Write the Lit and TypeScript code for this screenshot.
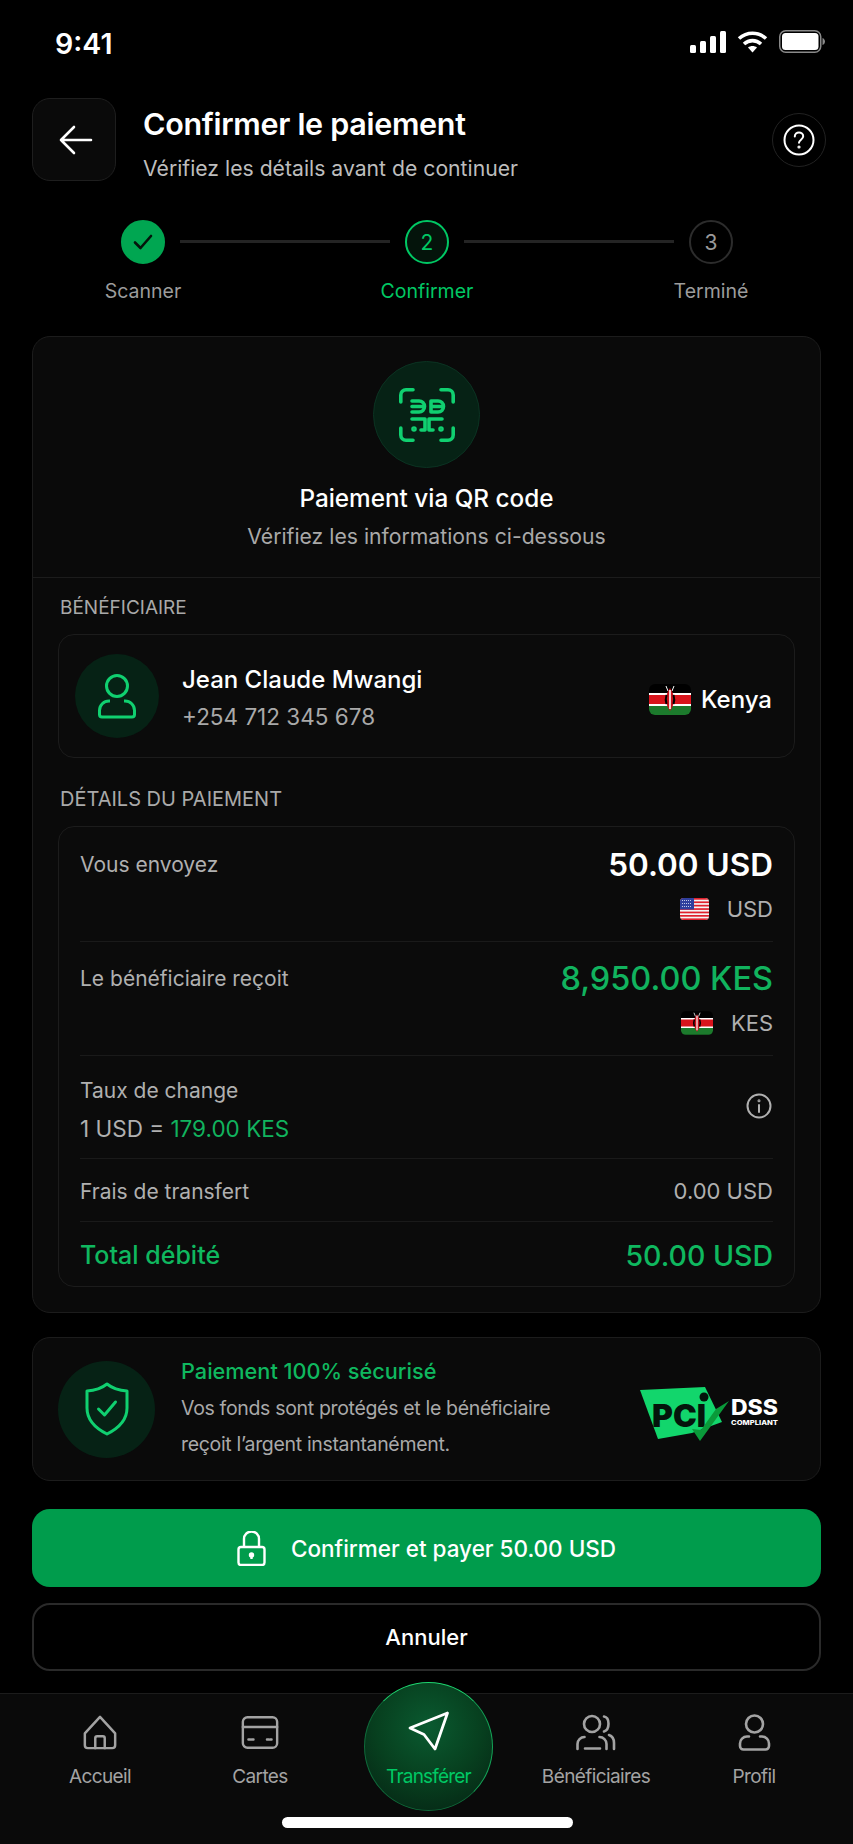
import { LitElement, html, css, svg } from 'lit';
import { customElement } from 'lit/decorators.js';

const kenyaFlag = (w: number, h: number) => html`
  <svg class="flag" width=${w} height=${h} viewBox="0 0 42 31">
    <rect width="42" height="31" rx="6" fill="#000"/>
    <path d="M0 10h42v11H0z" fill="#d8141c"/>
    <path d="M0 21h42v4a6 6 0 0 1-6 6H6a6 6 0 0 1-6-6z" fill="#1c7a2c"/>
    <path d="M0 9h42v2H0zM0 20h42v2H0z" fill="#fff"/>
    <path d="M17 2l2 5M25 2l-2 5" stroke="#fff" stroke-width="1"/>
    <path d="M21 4c3 4 4 8 4 11.500s-1 7.500-4 11.500c-3-4-4-8-4-11.500S18 8 21 4z" fill="#c8101a"/>
    <path d="M17.500 11c-1 3-1 6 0 9M24.500 11c1 3 1 6 0 9" stroke="#000" stroke-width="2" fill="none"/>
    <path d="M21 6v19" stroke="#fff" stroke-width="1.600"/>
  </svg>`;

const usFlag = html`
  <svg class="flag" width="29" height="22" viewBox="0 0 29 22">
    <defs><clipPath id="us"><rect width="29" height="22" rx="4"/></clipPath></defs>
    <g clip-path="url(#us)">
      <rect width="29" height="22" fill="#f4f4f4"/>
      ${[0, 1, 2, 3, 4, 5, 6].map((i) => svg`<rect y=${i * 3.4} width="29" height="1.700" fill="#e0202c"/>`)}
      <rect width="14" height="11.500" fill="#2f3f9e"/>
      <path d="M2 2.500h10M2 5.500h10M2 8.500h10" stroke="#c5cbe8" stroke-width="1" stroke-dasharray="1 1"/>
    </g>
  </svg>`;

const navIcons: Record<string, unknown> = {
  home: svg`<path d="M19 2.500 3 20v12.500a3 3 0 0 0 3 3h26a3 3 0 0 0 3-3V20z"/><path d="M14 35.500V25a2 2 0 0 1 2-2h6a2 2 0 0 1 2 2v10.500"/>`,
  card: svg`<rect x="2" y="2" width="37" height="33" rx="5"/><path d="M2 12.500h37"/><path d="M8 26h7M28 26h5" stroke-dasharray="2 1.500"/>`,
  people: svg`<circle cx="17" cy="10" r="8"/><path d="M29 2.500c6 1 6 13 0 15"/><path d="M2.500 35v-5a7 7 0 0 1 7-7M24.500 23a7 7 0 0 1 7 7v5M10 34.500h15"/><path d="M34 21c3 1 5 4 5 8v6"/>`,
  person: svg`<circle cx="16.500" cy="10" r="8.500"/><path d="M11 22.500H9a7 7 0 0 0-7 7v2.500a3.500 3.500 0 0 0 3.500 3.500h22a3.500 3.500 0 0 0 3.500-3.500v-2.500a7 7 0 0 0-7-7h-2"/>`,
};

const navItems = [
  { label: 'Accueil', icon: 'home', w: 36, vb: '0 0 38 38', center: 100 },
  { label: 'Cartes', icon: 'card', w: 38, vb: '0 0 41 37', center: 260 },
  { label: 'Bénéficiaires', icon: 'people', w: 42, vb: '0 0 42 37', center: 596 },
  { label: 'Profil', icon: 'person', w: 33, vb: '0 0 33 37', center: 754 },
];

@customElement('app-root')
export class AppRoot extends LitElement {
  static styles = css`
    :host {
      display: block;
      width: 853px;
      height: 1844px;
      background: #000;
      color: #fff;
      font-family: Inter, 'Liberation Sans', sans-serif;
      overflow: hidden;
    }
    * { box-sizing: border-box; }

    .status {
      height: 98px;
      display: flex;
      justify-content: space-between;
      padding: 30px 28px 0 55px;
    }
    .time { font-size: 28.500px; font-weight: 600; line-height: 28px; }
    .status-icons { display: flex; gap: 11px; height: 23px; align-items: center; }

    .header {
      height: 83px;
      padding: 0 27px 0 32px;
      display: flex;
      align-items: center;
    }
    .back {
      width: 84px;
      height: 83px;
      border: 1px solid #1e1e1e;
      border-radius: 18px;
      background: #0a0a0a;
      display: flex;
      align-items: center;
      justify-content: center;
      padding-left: 3px;
      margin-right: 27px;
    }
    .head-text { flex: 1; padding-top: 10px; }
    .head-text h1 { margin: -3px 0 0; font-size: 30.500px; font-weight: 600; line-height: 38px; letter-spacing: -0.3px; }
    .head-text p { margin: 11px 0 0; font-size: 21.200px; line-height: 28px; color: #bdbdbd; }
    .help {
      width: 54px;
      height: 54px;
      border: 1px solid #222;
      border-radius: 50%;
      display: flex;
      align-items: center;
      justify-content: center;
    }

    .stepper {
      display: flex;
      align-items: flex-start;
      padding: 0 120px 0 121px;
      margin-top: 39px;
      height: 116px;
    }
    .step { width: 44px; display: flex; flex-direction: column; align-items: center; }
    .dot {
      width: 44px;
      height: 44px;
      border-radius: 50%;
      border: 2px solid #2c2c2c;
      display: flex;
      align-items: center;
      justify-content: center;
      font-size: 21px;
      color: #9a9a9a;
    }
    .dot.done { background: #00a651; border-color: #00a651; }
    .dot.active { border-color: #00c864; color: #00c864; background: #04140b; }
    .step span {
      white-space: nowrap;
      margin-top: 14px;
      font-size: 19.500px;
      line-height: 26px;
      color: #9c9c9c;
    }
    .step span.on { color: #00c864; }
    .line { flex: 1; height: 3px; background: #242424; margin: 20px 15px 0; }

    .card {
      margin: 0 32px;
      background: #0a0a0a;
      border: 1px solid #1c1c1c;
      border-radius: 18px;
    }
    .main { height: 977px; }
    .hero {
      height: 241px;
      border-bottom: 1px solid #1c1c1c;
      display: flex;
      flex-direction: column;
      align-items: center;
      padding-top: 24px;
    }
    .round {
      border-radius: 50%;
      background: #062215;
      display: flex;
      align-items: center;
      justify-content: center;
      flex: none;
    }
    .round.qr { width: 107px; height: 107px; border: 1px solid #0b3322; }
    .hero h2 { margin: 15px 0 0; font-size: 24.300px; font-weight: 500; line-height: 30px; }
    .hero p { margin: 9px 0 0; font-size: 21.200px; line-height: 28px; color: #a9a9a9; }

    .section { padding: 0 25px; }
    .section h3 {
      margin: 0;
      height: 56px;
      padding: 2px 0 0 2px;
      display: flex;
      align-items: center;
      font-size: 19px;
      font-weight: 400;
      color: #a9a9a9;
    }
    .inner { background: #0b0b0b; border: 1px solid #1c1c1c; border-radius: 16px; }
    .benef { height: 124px; display: flex; align-items: center; padding: 0 22px 0 16px; }
    .round.avatar { width: 84px; height: 84px; margin-right: 23px; }
    .who { flex: 1; padding-top: 3px; }
    .who b { display: block; font-size: 24px; font-weight: 500; line-height: 32px; }
    .who small { display: block; margin-top: 6px; font-size: 22.500px; line-height: 30px; color: #a9a9a9; }
    .country { display: flex; align-items: center; gap: 10px; padding-top: 6px; font-size: 24px; font-weight: 500; }
    .flag { display: block; flex: none; }
    .section.details h3 { margin-top: 12px; font-size: 20px; }

    .table {
      height: 461px;
      padding: 0 21px;
      display: grid;
      grid-template-rows: 115px 114px 103px 63px 1fr;
    }
    .row {
      display: flex;
      justify-content: space-between;
      border-bottom: 1px solid #1a1a1a;
      font-size: 21px;
      color: #b0b0b0;
    }
    .row:last-child { border-bottom: 0; }
    .row.tall { padding-top: 17px; }
    .row.tall + .row.tall { padding-top: 16px; }
    .row.center { align-items: center; }
    .row.low { padding-top: 2px; }
    .row .right { display: flex; flex-direction: column; align-items: flex-end; }
    .lbl { line-height: 42px; }
    .amount { font-size: 31.500px; font-weight: 600; line-height: 42px; color: #fff; }
    .amount.green { color: #11b35e; font-weight: 500; font-size: 32.500px; }
    .cur { display: flex; align-items: center; gap: 18px; margin-top: 6px; font-size: 22px; line-height: 34px; }
    .rate { line-height: 38px; margin-top: 6px; }
    .rate div:last-child { font-size: 22.500px; }
    .info { margin: -2px 1px 0 0; }
    .val { font-size: 22px; }
    .green { color: #11b35e; }
    .total { font-size: 25px; font-weight: 500; color: #0fb85f; }
    .total-amount { font-size: 28.500px; font-weight: 500; color: #0fb85f; }

    .secure {
      height: 144px;
      margin-top: 24px;
      display: flex;
      align-items: center;
      padding: 0 41px 0 25px;
    }
    .round.shield { width: 97px; height: 97px; margin-right: 26px; }
    .secure-text { flex: 1; padding-top: 1px; }
    .secure-text b { display: block; font-size: 21.700px; font-weight: 500; line-height: 28px; color: #0fb85f; }
    .secure-text p { margin: 5px 0 0; font-size: 19.500px; line-height: 36px; letter-spacing: -0.33px; color: #a9a9a9; }
    .pci { flex: none; margin-top: 12px; }

    .primary {
      margin: 28px 32px 0;
      height: 78px;
      border-radius: 18px;
      background: #009c4c;
      display: flex;
      align-items: center;
      justify-content: center;
      gap: 25px;
      font-size: 22.500px;
      font-weight: 500;
    }
    .ghost {
      margin: 16px 32px 0;
      height: 68px;
      border-radius: 18px;
      border: 2px solid #2a2a2a;
      display: flex;
      align-items: center;
      justify-content: center;
      font-size: 22px;
      font-weight: 500;
    }

    .nav {
      position: relative;
      margin-top: 22px;
      height: 151px;
      background: #0a0a0a;
      border-top: 1px solid #1c1c1c;
    }
    .tab {
      position: absolute;
      top: 20px;
      width: 140px;
      margin-left: -70px;
      display: flex;
      flex-direction: column;
      align-items: center;
      font-size: 19px;
      letter-spacing: -0.6px;
      color: #a3a3a3;
    }
    .tab svg { height: 37px; display: block; }
    .tab span { margin-top: 13px; line-height: 26px; white-space: nowrap; }
    .send {
      position: absolute;
      left: 364px;
      top: -12px;
      width: 129px;
      height: 129px;
      border-radius: 50%;
      background: radial-gradient(circle at 50% 35%, #0a5a30 0%, #07401f 50%, #052012 100%);
      border: 1px solid #0f6a3a;
      border-top-color: #1ed770;
      border-right-color: #14a357;
      display: flex;
      flex-direction: column;
      align-items: center;
      padding-top: 28px;
      font-size: 19px;
      letter-spacing: -0.8px;
      color: #00c864;
    }
    .send svg { display: block; margin-right: -1px; }
    .send span { margin-top: 13px; line-height: 26px; }
    .home-bar {
      position: absolute;
      left: 282px;
      top: 123px;
      width: 291px;
      height: 11px;
      border-radius: 6px;
      background: #fff;
    }
  `;

  render() {
    return html`
      <div class="status">
        <div class="time">9:41</div>
        <div class="status-icons">
          <svg width="36" height="22" viewBox="0 0 36 22" fill="#fff">
            <rect x="0" y="14" width="6" height="8" rx="1.500"/>
            <rect x="10" y="10" width="6" height="12" rx="1.500"/>
            <rect x="20" y="5" width="6" height="17" rx="1.500"/>
            <rect x="30" y="0" width="6" height="22" rx="1.500"/>
          </svg>
          <svg width="31" height="22" viewBox="0 0 31 22" fill="none" stroke="#fff" stroke-width="3.600">
            <path d="M2 7.500c8-7 19-7 27 0"/>
            <path d="M7 13c5-4.500 12-4.500 17 0"/>
            <path d="M15.500 21.500l-4.500-5c2.500-2 6.500-2 9 0z" fill="#fff" stroke="none"/>
          </svg>
          <svg width="46" height="23" viewBox="0 0 46 23">
            <rect x="0.750" y="0.750" width="41" height="21.500" rx="6" fill="none" stroke="#8a8a8a" stroke-width="1.500"/>
            <rect x="3" y="3" width="36.500" height="17" rx="3.500" fill="#fff"/>
            <path d="M43.500 8v7c1.500-.5 2.500-2 2.500-3.500S45 8.500 43.500 8z" fill="#8a8a8a"/>
          </svg>
        </div>
      </div>

      <div class="header">
        <div class="back">
          <svg width="34" height="30" viewBox="0 0 34 30" fill="none" stroke="#fff" stroke-width="2.600" stroke-linecap="round" stroke-linejoin="round">
            <path d="M15 2 2 15l13 13M2 15h30"/>
          </svg>
        </div>
        <div class="head-text">
          <h1>Confirmer le paiement</h1>
          <p>Vérifiez les détails avant de continuer</p>
        </div>
        <div class="help">
          <svg width="32" height="32" viewBox="0 0 32 32" fill="none" stroke="#fff" stroke-width="2" stroke-linecap="round">
            <circle cx="16" cy="16" r="14.500"/>
            <path d="M11.800 12.500c0-2.500 2-4 4.200-4s4.200 1.500 4.200 3.800c0 3.400-4.200 3.400-4.200 6.500"/>
            <circle cx="16" cy="23" r="0.600" fill="#fff"/>
          </svg>
        </div>
      </div>

      <div class="stepper">
        <div class="step">
          <div class="dot done">
            <svg width="20" height="16" viewBox="0 0 20 16" fill="none" stroke="#04140b" stroke-width="2.600" stroke-linecap="round" stroke-linejoin="round"><path d="M2 8.500 7.500 14 18 2"/></svg>
          </div>
          <span>Scanner</span>
        </div>
        <div class="line"></div>
        <div class="step"><div class="dot active">2</div><span class="on">Confirmer</span></div>
        <div class="line"></div>
        <div class="step"><div class="dot">3</div><span>Terminé</span></div>
      </div>

      <div class="card main">
        <div class="hero">
          <div class="round qr">
            <svg width="56" height="54" viewBox="0 0 56 54" fill="none" stroke="#10d070" stroke-width="3.600" stroke-linecap="round" stroke-linejoin="round">
              <path d="M1.800 14V7A5.200 5.200 0 0 1 7 1.800h7M42 1.800h7A5.200 5.200 0 0 1 54.200 7v7M1.800 40v7A5.200 5.200 0 0 0 7 52.200h7M54.200 40v7A5.200 5.200 0 0 1 49 52.200h-7"/>
              <path d="M13 13h7a5.500 5.500 0 0 1 0 11h-7M13 18.500h12"/>
              <path d="M32 18.500h12M32 13v11h7a5.500 5.500 0 0 0 0-11z"/>
              <path d="M13 31h13v11h-4M30 42V31h13M30 42h4"/>
              <circle cx="15" cy="41" r="1" fill="#10d070"/>
              <circle cx="42" cy="41" r="1" fill="#10d070"/>
            </svg>
          </div>
          <h2>Paiement via QR code</h2>
          <p>Vérifiez les informations ci-dessous</p>
        </div>

        <div class="section">
          <h3>BÉNÉFICIAIRE</h3>
          <div class="inner benef">
            <div class="round avatar">
              <svg width="38" height="45" viewBox="0 0 38 45" fill="none" stroke="#10d070" stroke-width="3" stroke-linejoin="round">
                <circle cx="19" cy="12" r="10.500"/>
                <path d="M12 27h-1a9.500 9.500 0 0 0-9.500 9.500v4a2.500 2.500 0 0 0 2.500 2.500h30a2.500 2.500 0 0 0 2.500-2.500v-4A9.500 9.500 0 0 0 27 27h-1"/>
              </svg>
            </div>
            <div class="who">
              <b>Jean Claude Mwangi</b>
              <small>+254 712 345 678</small>
            </div>
            <div class="country">${kenyaFlag(42, 31)}Kenya</div>
          </div>
        </div>

        <div class="section details">
          <h3>DÉTAILS DU PAIEMENT</h3>
          <div class="inner table">
            <div class="row tall">
              <div class="lbl">Vous envoyez</div>
              <div class="right">
                <div class="amount">50.00 USD</div>
                <div class="cur">${usFlag}USD</div>
              </div>
            </div>
            <div class="row tall">
              <div class="lbl">Le bénéficiaire reçoit</div>
              <div class="right">
                <div class="amount green">8,950.00 KES</div>
                <div class="cur">${kenyaFlag(32, 24)}KES</div>
              </div>
            </div>
            <div class="row center">
              <div class="rate">
                <div>Taux de change</div>
                <div>1 USD = <span class="green">179.00 KES</span></div>
              </div>
              <svg class="info" width="26" height="26" viewBox="0 0 26 26" fill="none" stroke="#b0b0b0" stroke-width="2" stroke-linecap="round">
                <circle cx="13" cy="13" r="11.500"/>
                <path d="M13 12v7"/>
                <circle cx="13" cy="7.800" r="0.500" fill="#b0b0b0"/>
              </svg>
            </div>
            <div class="row center low"><div>Frais de transfert</div><div class="val">0.00 USD</div></div>
            <div class="row center low"><div class="total">Total débité</div><div class="total-amount">50.00 USD</div></div>
          </div>
        </div>
      </div>

      <div class="card secure">
        <div class="round shield">
          <svg width="44" height="54" viewBox="0 0 44 54" fill="none" stroke="#10d070" stroke-width="3" stroke-linejoin="round" stroke-linecap="round">
            <path d="M22 2c5 4 12 6.500 20 7v17c0 12-8 20-20 26C10 46 2 38 2 26V9c8-.5 15-3 20-7z"/>
            <path d="M13.500 27l6 6 11-13"/>
          </svg>
        </div>
        <div class="secure-text">
          <b>Paiement 100% sécurisé</b>
          <p>Vos fonds sont protégés et le bénéficiaire<br />reçoit l’argent instantanément.</p>
        </div>
        <svg class="pci" width="139" height="56" viewBox="0 0 139 56">
          <path d="M0 3 65 0 82 35 52 46 18 52z" fill="#12d66c"/>
          <text x="12" y="40" font-family="Inter, sans-serif" font-size="31" font-weight="900" fill="#04140b" textLength="54" lengthAdjust="spacingAndGlyphs">PCI</text>
          <circle cx="64" cy="10" r="4.500" fill="#04140b"/>
          <path d="M52 42 60 54 89 14 76 22 61 43z" fill="#0a9a3a"/>
          <text x="91" y="28" font-family="Inter, sans-serif" font-size="21" font-weight="800" fill="#fff" textLength="47" lengthAdjust="spacingAndGlyphs">DSS</text>
          <text x="91" y="38" font-family="Inter, sans-serif" font-size="6.500" font-weight="800" fill="#fff" textLength="47" lengthAdjust="spacingAndGlyphs">COMPLIANT</text>
        </svg>
      </div>

      <div class="primary">
        <svg width="29" height="35" viewBox="0 0 29 35" fill="none" stroke="#fff" stroke-width="2.400" stroke-linejoin="round">
          <path d="M7 16V8a7.500 7.500 0 0 1 15 0v8"/>
          <rect x="1.500" y="16" width="26" height="18" rx="2.500"/>
          <circle cx="14.500" cy="24" r="1.500" fill="#fff"/>
          <path d="M14.500 24v4"/>
        </svg>
        Confirmer et payer 50.00 USD
      </div>
      <div class="ghost">Annuler</div>

      <div class="nav">
        ${navItems.map(
          (t) => html`
            <div class="tab" style="left:${t.center}px">
              <svg width=${t.w} viewBox=${t.vb} fill="none" stroke="#a3a3a3" stroke-width="2.600" stroke-linejoin="round" stroke-linecap="round">${navIcons[t.icon]}</svg>
              <span>${t.label}</span>
            </div>`
        )}
        <div class="send">
          <svg width="42" height="40" viewBox="0 0 42 40" fill="none" stroke="#fff" stroke-width="2.800" stroke-linejoin="round" stroke-linecap="round">
            <path d="M39.500 2 2 17l14 6.500L27 38z"/>
          </svg>
          <span>Transférer</span>
        </div>
        <div class="home-bar"></div>
      </div>
    `;
  }
}
